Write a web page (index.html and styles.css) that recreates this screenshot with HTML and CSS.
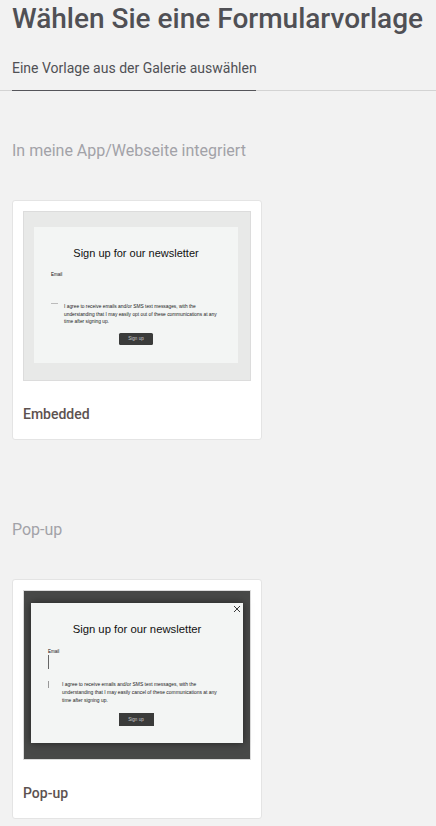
FILE: index.html
```html
<!DOCTYPE html>
<html lang="de">
<head>
<meta charset="utf-8">
<title>Formularvorlage</title>
<link rel="stylesheet" href="styles.css">
</head>
<body>
<h1 class="title">Wählen Sie eine Formularvorlage</h1>
<div class="tabs"><div class="tab">Eine Vorlage aus der Galerie auswählen</div></div>

<section class="group group-first">
  <h2 class="group-title">In meine App/Webseite integriert</h2>
  <article class="card">
    <div class="preview preview-embedded">
      <div class="form form-embedded">
        <div class="form-title">Sign up for our newsletter</div>
        <div class="label">Email</div>
        <div class="input"></div>
        <div class="consent">
          <span class="check"></span>
          <p class="consent-text">I agree to receive emails and/or SMS text messages, with the understanding that I may easily opt out of these communications at any time after signing up.</p>
        </div>
        <div class="btn btn-round">Sign up</div>
      </div>
    </div>
    <div class="card-name">Embedded</div>
  </article>
</section>

<section class="group">
  <h2 class="group-title">Pop-up</h2>
  <article class="card">
    <div class="preview preview-popup">
      <div class="form form-popup">
        <svg class="close" viewBox="0 0 8 8" aria-hidden="true"><path d="M1 1l6 6M7 1L1 7"/></svg>
        <div class="form-title form-title-popup">Sign up for our newsletter</div>
        <div class="label label-popup">Email</div>
        <div class="input input-popup"></div>
        <div class="consent consent-popup">
          <span class="check check-popup"></span>
          <p class="consent-text consent-text-popup">I agree to receive emails and/or SMS text messages, with the understanding that I may easily cancel of these communications at any time after signing up.</p>
        </div>
        <div class="btn btn-popup">Sign up</div>
      </div>
    </div>
    <div class="card-name">Pop-up</div>
  </article>
</section>
</body>
</html>
```
FILE: styles.css
```css
html, body { margin: 0; padding: 0; }
body {
  width: 436px;
  height: 826px;
  overflow: hidden;
  background: #f2f2f2;
  font-family: Roboto, "Liberation Sans", sans-serif;
  color: #505055;
}
.title {
  margin: 0;
  padding: 0 0 0 12px;
  font-size: 28px;
  line-height: 38px;
  font-weight: 500;
  white-space: nowrap;
}
.tabs {
  margin-top: 11px;
  border-bottom: 1px solid #d3d3d3;
  height: 41px;
}
.tab {
  margin-left: 12px;
  width: 244px;
  height: 41px;
  border-bottom: 1px solid #55555a;
  font-size: 14px;
  line-height: 38px;
  white-space: nowrap;
}
.group { padding: 0 0 0 12px; }
.group-first { margin-top: 48px; }
.group + .group { margin-top: 78px; }
.group-title {
  margin: 0 0 37px;
  font-size: 16px;
  line-height: 24px;
  font-weight: 400;
  color: #a2a2a8;
}
.card {
  width: 250px;
  height: 240px;
  box-sizing: border-box;
  padding: 10px;
  background: #fff;
  border: 1px solid #e4e4e4;
  border-radius: 3px;
}
.preview {
  height: 170px;
  box-sizing: border-box;
  border: 1px solid #dcdcdc;
  display: flex;
  justify-content: center;
  align-items: center;
}
.preview-embedded { background: #e8e9e8; }
.preview-popup { background: #484948; }
.form {
  background: #f3f5f4;
  display: flex;
  flex-direction: column;
  color: #111;
  position: relative;
  box-sizing: border-box;
}
.form-embedded {
  width: 204px;
  height: 136px;
  padding: 20px 17px 0;
  margin: -2px 0 0 -2px;
}
.form-popup {
  width: 212px;
  height: 140px;
  padding: 20px 17px 0;
  margin-top: -4px;
  box-shadow: 0 0 8px rgba(0, 0, 0, 0.55);
}
.form-title {
  font-family: "Liberation Sans", Arial, sans-serif;
  font-size: 11px;
  line-height: 13px;
  text-align: center;
  color: #111;
}
.form-title-popup { font-size: 11.3px; }
.label {
  margin-top: 12px;
  font-family: "Liberation Sans", Arial, sans-serif;
  font-size: 4.5px;
  line-height: 6px;
}
.label-popup { margin-top: 13px; }
.input { height: 15px; }
.input-popup {
  height: 14px;
  margin-top: 0;
  border-left: 1px solid #666;
}
.consent {
  display: flex;
  gap: 6px;
  margin-top: 10px;
}
.consent-popup { margin-top: 12px; }
.check {
  flex: none;
  width: 7px;
  height: 1px;
  background: #bbb;
}
.check-popup {
  width: 1px;
  height: 7px;
  margin-right: 7px;
  background: #999;
}
.consent-text {
  margin: 0;
  font-family: "Liberation Sans", Arial, sans-serif;
  font-size: 4.85px;
  line-height: 7.6px;
  color: #222;
}
.consent-text-popup { font-size: 4.95px; line-height: 8px; }
.btn {
  align-self: center;
  width: 34px;
  height: 12px;
  margin-top: 7px;
  background: #3a3b3a;
  color: #c8c8c8;
  font-family: "Liberation Sans", Arial, sans-serif;
  font-size: 4.6px;
  line-height: 12px;
  text-align: center;
}
.btn-round { border-radius: 1.5px; }
.btn-popup { width: 35px; height: 13px; line-height: 13px; margin-top: 8px; margin-right: 2px; }
.close {
  position: absolute;
  top: 2px;
  right: 2px;
  width: 8px;
  height: 8px;
  fill: none;
  stroke: #222;
  stroke-width: 0.9;
}
.card-name {
  margin-top: 23px;
  font-size: 14px;
  line-height: 20px;
  font-weight: 500;
  color: #5d5250;
}
```
